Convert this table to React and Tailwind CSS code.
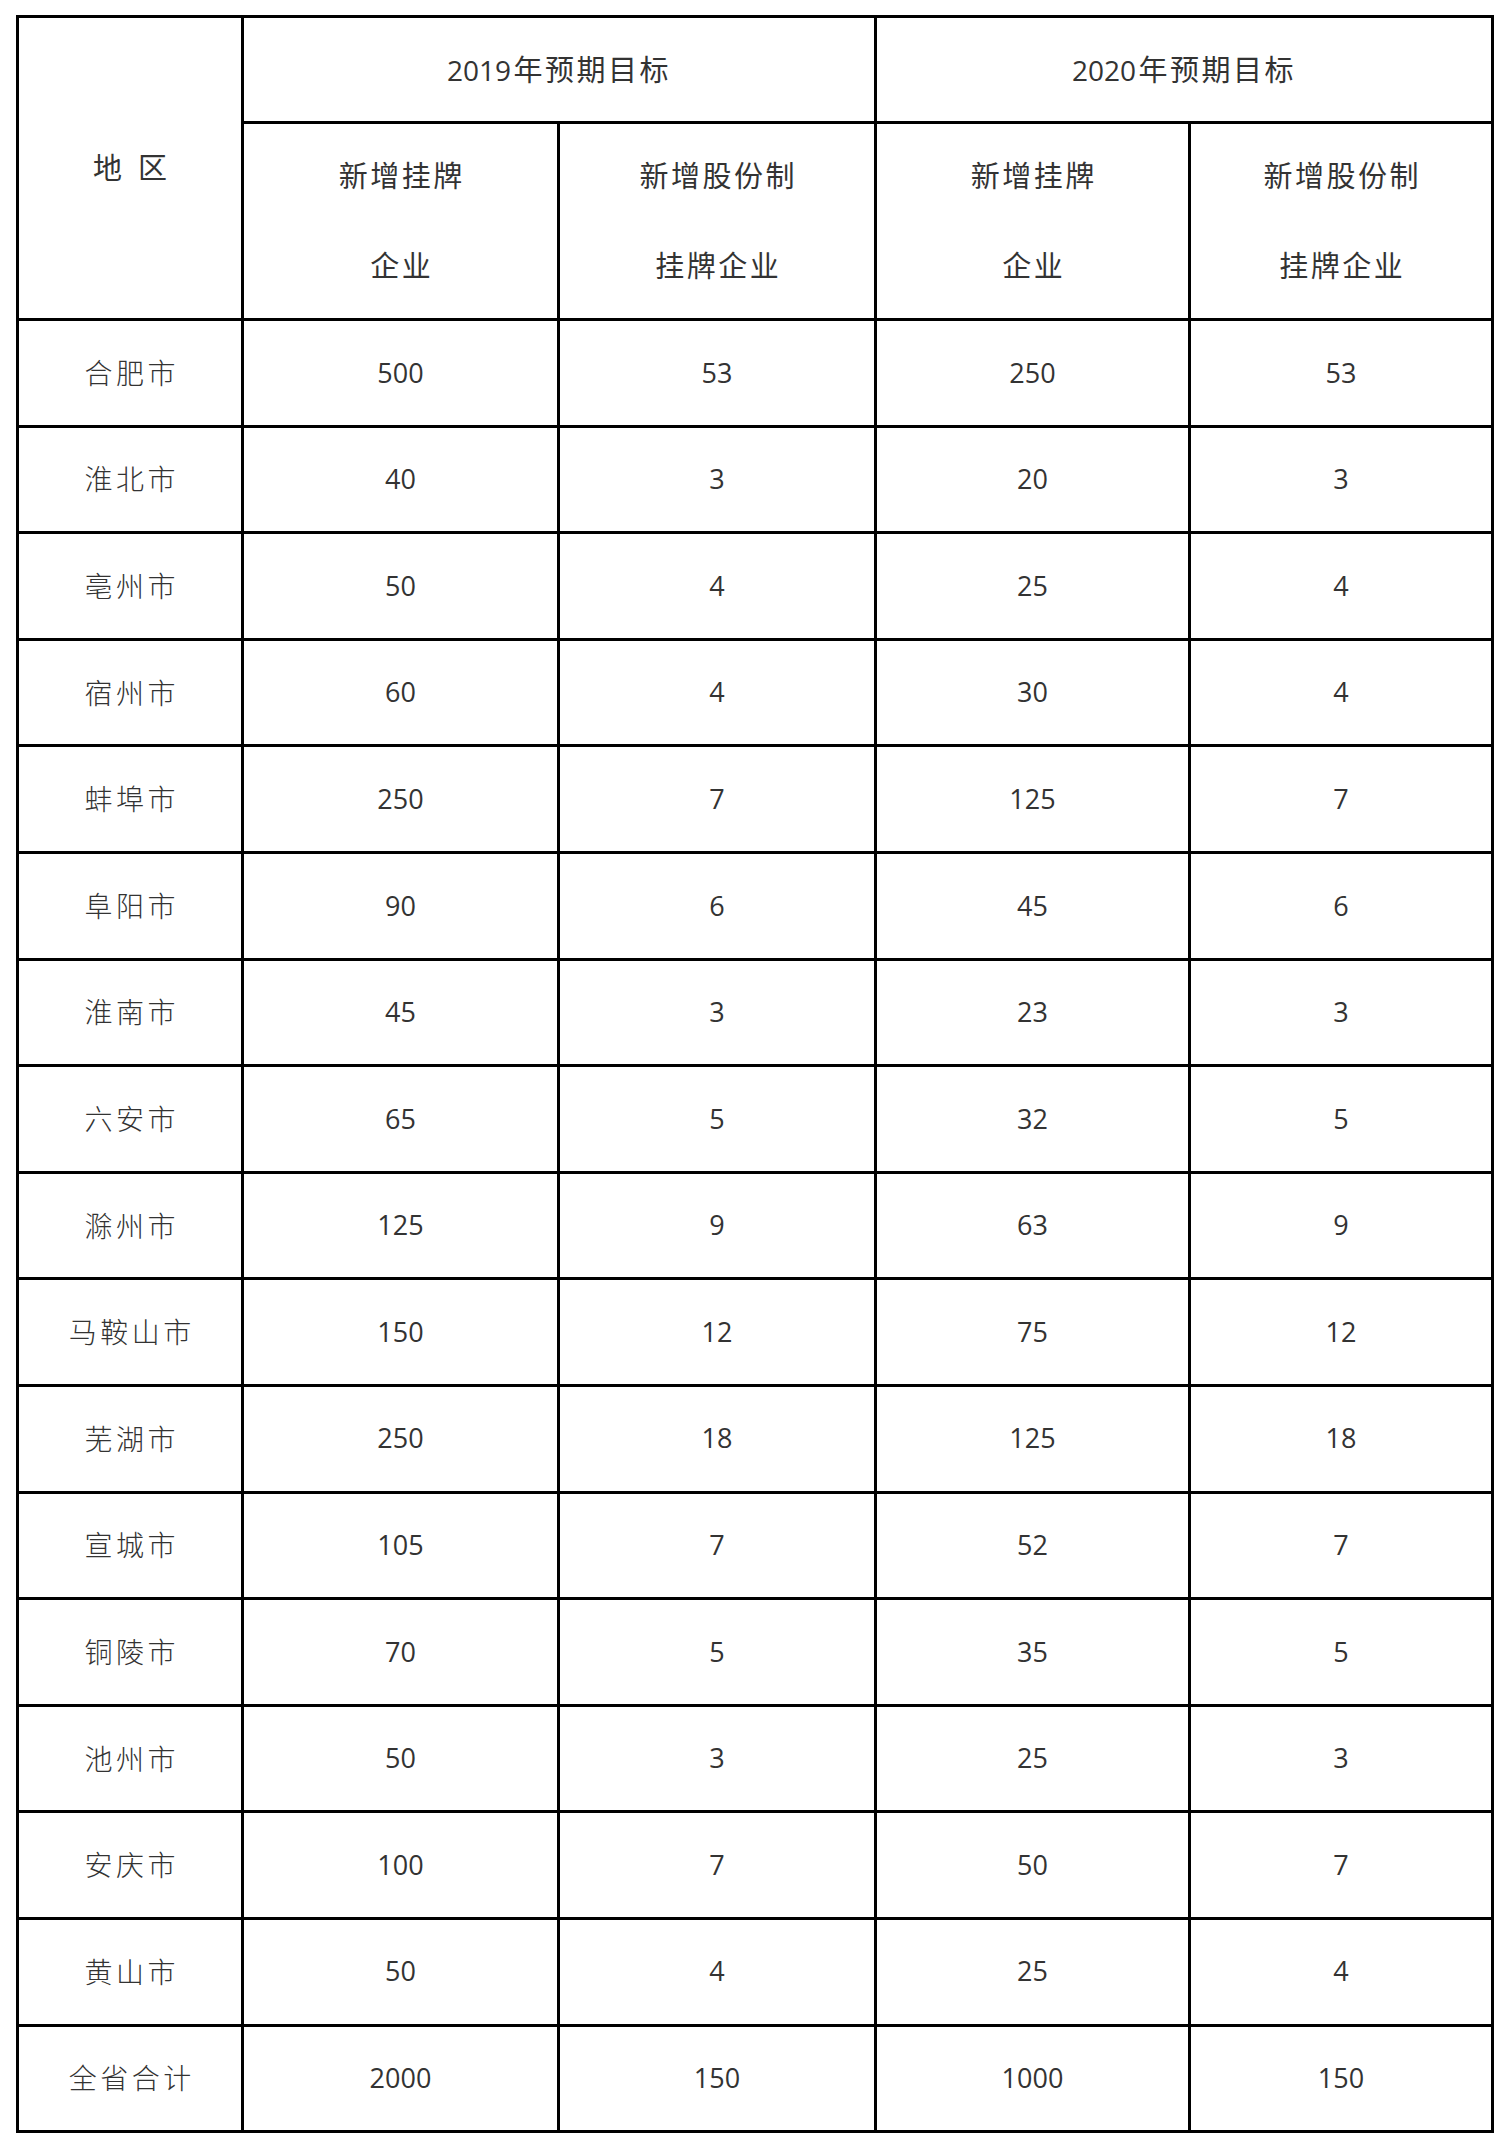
import React from "react";

// =====================================================
// DATA
// =====================================================

const rows = [
  ["合肥市", "500", "53", "250", "53"],
  ["淮北市", "40", "3", "20", "3"],
  ["亳州市", "50", "4", "25", "4"],
  ["宿州市", "60", "4", "30", "4"],
  ["蚌埠市", "250", "7", "125", "7"],
  ["阜阳市", "90", "6", "45", "6"],
  ["淮南市", "45", "3", "23", "3"],
  ["六安市", "65", "5", "32", "5"],
  ["滁州市", "125", "9", "63", "9"],
  ["马鞍山市", "150", "12", "75", "12"],
  ["芜湖市", "250", "18", "125", "18"],
  ["宣城市", "105", "7", "52", "7"],
  ["铜陵市", "70", "5", "35", "5"],
  ["池州市", "50", "3", "25", "3"],
  ["安庆市", "100", "7", "50", "7"],
  ["黄山市", "50", "4", "25", "4"],
  ["全省合计", "2000", "150", "1000", "150"],
];

const cell = "bg-white flex items-center justify-center text-center";
const cjk = "text-[29px] tracking-[2.5px] pl-[2.5px]";

const HeaderTwoLine = ({ top, bottom }) => (
  <div className={`${cell} flex-col ${cjk} leading-[90px]`}>
    <span>{top}</span>
    <span>{bottom}</span>
  </div>
);

// =====================================================
// MAIN
// =====================================================

export default function App() {
  return (
    <div
      className="min-h-[2144px] w-[1506px] bg-white pt-[15px] pl-[16px] text-[#333]"
      style={{ fontFamily: '"Open Sans", "Noto Sans CJK SC", sans-serif' }}
    >
      <div className="grid w-[1478px] gap-[3px] bg-black p-[3px] grid-cols-[222px_313px_314px_311px_300px] grid-rows-[103px_194px_repeat(17,103.6px)]">
        {/* HEADER */}
        <div className={`${cell} row-span-2 text-[29px]`}>
          <span>地</span>
          <span className="w-[16px]" />
          <span>区</span>
        </div>
        <div className={`${cell} col-span-2`}>
          <span className="text-[28px]">2019</span>
          <span className={cjk}>年预期目标</span>
        </div>
        <div className={`${cell} col-span-2`}>
          <span className="text-[28px]">2020</span>
          <span className={cjk}>年预期目标</span>
        </div>
        <HeaderTwoLine top="新增挂牌" bottom="企业" />
        <HeaderTwoLine top="新增股份制" bottom="挂牌企业" />
        <HeaderTwoLine top="新增挂牌" bottom="企业" />
        <HeaderTwoLine top="新增股份制" bottom="挂牌企业" />

        {/* BODY */}
        {rows.map((r) => (
          <React.Fragment key={r[0]}>
            <div
              className={`${cell} text-[28px] font-light tracking-[3.5px] pl-[3.5px]`}
            >
              {r[0]}
            </div>
            {r.slice(1).map((v, i) => (
              <div key={i} className={`${cell} text-[27px]`}>
                {v}
              </div>
            ))}
          </React.Fragment>
        ))}
      </div>
    </div>
  );
}
